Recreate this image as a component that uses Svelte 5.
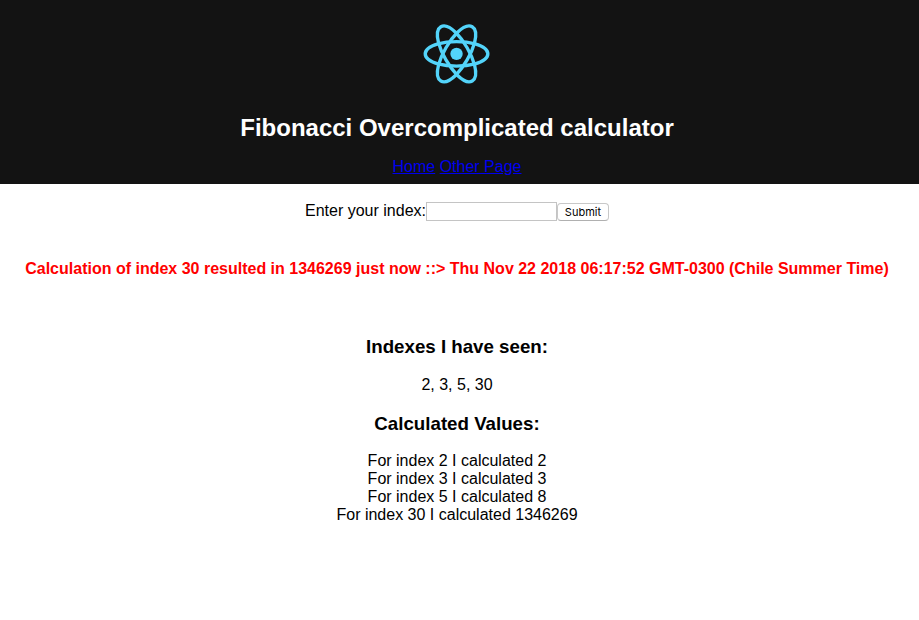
<script>
  const seen = [2, 3, 5, 30];
  const values = [[2, 2], [3, 3], [5, 8], [30, 1346269]];
  const orbit = 'M-233 0C-233 -32 -195 -59 -138 -75C-97 -86 -50 -91 0 -91S97 -86 138 -75C195 -59 233 -32 233 0S195 59 138 75C97 86 50 91 0 91S-97 86 -138 75C-195 59 -233 32 -233 0Z';
  let index = $state('');
</script>

<div class="app">
  <header>
    <svg class="logo" viewBox="0 0 841.9 595.3" aria-hidden="true">
      <g fill="none" stroke="#53d4fa" stroke-width="25" transform="translate(417.5 296.5)">
        <path d={orbit} />
        <path d={orbit} transform="rotate(60)" />
        <path d={orbit} transform="rotate(120)" />
      </g>
      <circle cx="417.5" cy="296.5" r="46" fill="#53d4fa" />
    </svg>
    <h1>Fibonacci Overcomplicated calculator</h1>
    <nav><a href="#home">Home</a>{' '}<a href="#other">Other Page</a></nav>
  </header>
  <form onsubmit={(e) => e.preventDefault()}>
    <label for="index">Enter your index:</label><input id="index" bind:value={index} /><button>Submit</button>
  </form>
  <h4>Calculation of index 30 resulted in 1346269 just now ::&gt; Thu Nov 22 2018 06:17:52 GMT-0300 (Chile Summer Time)</h4>
  <h3 class="first">Indexes I have seen:</h3>
  <p>{seen.join(', ')}</p>
  <h3>Calculated Values:</h3>
  {#each values as [i, v]}
    <div class="value">For index {i} I calculated {v}</div>
  {/each}
</div>

<style>
  :global(body) { margin: 0; background: #fff; }
  .app { width: 914px; text-align: center; font: 16px/18px "Liberation Sans", Arial, sans-serif; color: #000; }
  header { box-sizing: border-box; width: 919px; height: 184px; padding: 14px 5px 0 0; background: #131313; color: #fff; }
  .logo { display: block; width: 114px; height: 80px; margin: 0 auto; }
  h1 { margin: 20px 0 16px; font-size: 24px; line-height: 28px; }
  nav { line-height: 18px; }
  a { color: #0000ee; }
  form { display: flex; justify-content: center; align-items: center; height: 20px; margin-top: 17px; }
  input { box-sizing: border-box; width: 131px; height: 19px; margin: 0; padding: 1px; border: 1px solid #c4c4c4; outline: 0; }
  button { box-sizing: border-box; width: 52px; height: 18px; margin: 1px 0 0; padding: 1px 0 0; border: 1px solid #c8c8c8; border-bottom-color: #b0b0b0; border-radius: 4px; background: #fff; font: 11px/14px Inter, sans-serif; color: #000; }
  h4 { margin: 39px 0 0; font-size: 16px; line-height: 18px; color: #f00; white-space: nowrap; }
  h3 { margin: 19px 0 17px; font-size: 18.72px; line-height: 22px; }
  .first { margin: 58px 0 18px; }
  p { margin: 0; }
</style>
